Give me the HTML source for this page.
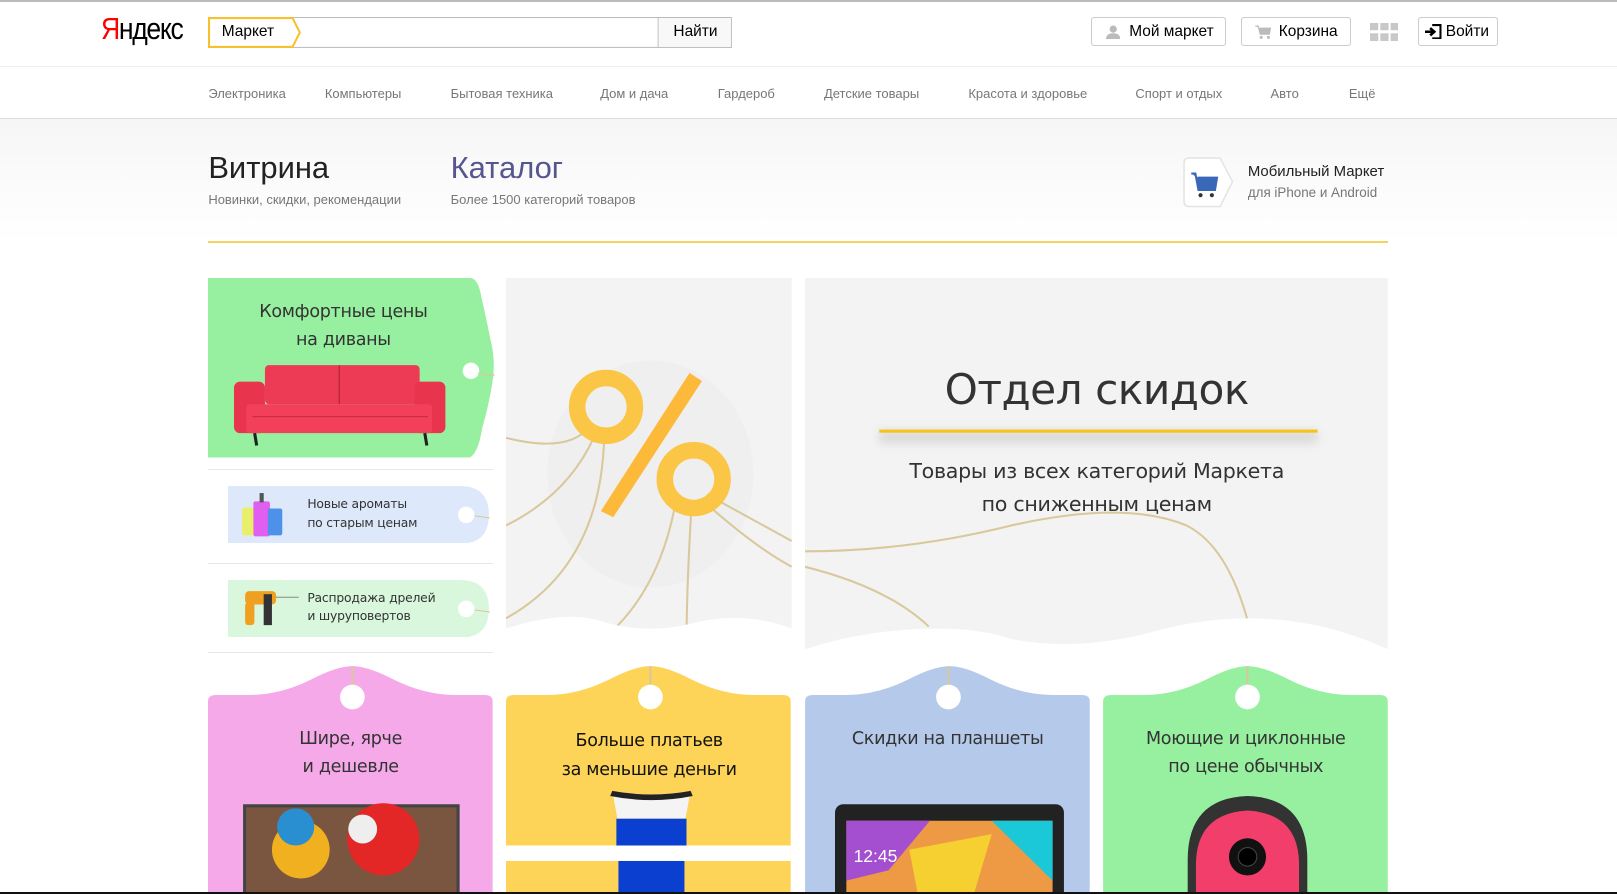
<!DOCTYPE html>
<html><head><meta charset="utf-8"><style>
html,body{margin:0;padding:0;background:#fff;overflow:hidden;width:1617px;height:894px}
#w{zoom:1.03125;width:1568px;height:867px;position:relative;font-family:"Liberation Sans","DejaVu Sans",sans-serif;color:#000;overflow:hidden;background:#fff}
.a{position:absolute}
.btn{position:absolute;top:16px;height:29px;border:1px solid #ccc;border-radius:3px;box-sizing:border-box;font-size:15px;line-height:27px;background:#fff}
.nav{position:absolute;top:83px;font-size:12.6px;color:#777}
.t{font-family:"DejaVu Sans","Liberation Sans",sans-serif;color:#333;text-align:center;position:absolute;letter-spacing:-0.3px}
</style></head><body><div id="w">
<div class="a" style="left:0;top:0;width:1568px;height:2px;background:#bbb"></div>
<div class="a" style="left:98px;top:11px;font-size:30px;letter-spacing:-1.5px;transform:scaleX(.86);transform-origin:left"><span style="color:#f00">Я</span>ндекс</div>
<svg class="a" style="left:202px;top:16px" width="508" height="31">
<rect x="0.5" y="0.5" width="507" height="29" fill="#fff" stroke="#bbb"/>
<path d="M1 1H82L89 15L82 29H1Z" fill="#fff" stroke="#f7c12e" stroke-width="2"/>
<line x1="436.5" y1="0" x2="436.5" y2="30" stroke="#bbb"/>
<rect x="437" y="1" width="70" height="28" fill="#f8f8f8"/>
</svg>
<div class="a" style="left:215px;top:22px;font-size:15px">Маркет</div>
<div class="a" style="left:653px;top:22px;font-size:15px">Найти</div>
<div class="btn" style="left:1058px;width:131px;padding-left:36px">Мой маркет</div>
<svg class="a" style="left:1072px;top:24px" width="14" height="14"><circle cx="7" cy="4" r="3.5" fill="#bbb"/><path d="M0 14Q0 8 7 8Q14 8 14 14Z" fill="#bbb"/></svg>
<div class="btn" style="left:1203px;width:107px;padding-left:36px">Корзина</div>
<svg class="a" style="left:1217px;top:24px" width="16" height="14"><path d="M0 1H3L5 9H14L15 3H4" fill="#bbb" stroke="#bbb"/><circle cx="6" cy="12" r="1.5" fill="#bbb"/><circle cx="13" cy="12" r="1.5" fill="#bbb"/></svg>
<svg class="a" style="left:1328px;top:22px" width="28" height="18" fill="#c8c8c8"><rect x="0" y="0" width="8" height="7"/><rect x="10" y="0" width="8" height="7"/><rect x="20" y="0" width="8" height="7"/><rect x="0" y="10" width="8" height="8"/><rect x="10" y="10" width="8" height="8"/><rect x="20" y="10" width="8" height="8"/></svg>
<div class="btn" style="left:1375px;width:78px;padding-left:26px">Войти</div>
<svg class="a" style="left:1382px;top:23px" width="16" height="15"><path d="M7 1H15V14H7" fill="none" stroke="#000" stroke-width="2"/><path d="M0 7.5H8M5 4L9 7.5L5 11" stroke="#000" stroke-width="2.5" fill="none"/></svg>
<div class="a" style="left:0;top:64px;width:1568px;height:1px;background:#eee"></div>
<div class="nav" style="left:202px">Электроника</div>
<div class="nav" style="left:315px">Компьютеры</div>
<div class="nav" style="left:437px">Бытовая техника</div>
<div class="nav" style="left:582px">Дом и дача</div>
<div class="nav" style="left:696px">Гардероб</div>
<div class="nav" style="left:799px">Детские товары</div>
<div class="nav" style="left:939px">Красота и здоровье</div>
<div class="nav" style="left:1101px">Спорт и отдых</div>
<div class="nav" style="left:1232px">Авто</div>
<div class="nav" style="left:1308px">Ещё</div>
<div class="a" style="left:0;top:114px;width:1568px;height:1px;background:#ddd"></div>
<div class="a" style="left:0;top:115px;width:1568px;height:120px;background:linear-gradient(#f6f6f6,#fff)"></div>
<div class="a" style="left:202px;top:145px;font-size:30px;color:#222">Витрина</div>
<div class="a" style="left:202px;top:186px;font-size:12.6px;color:#777">Новинки, скидки, рекомендации</div>
<div class="a" style="left:437px;top:145px;font-size:30px;color:#55558f">Каталог</div>
<div class="a" style="left:437px;top:186px;font-size:12.6px;color:#777">Более 1500 категорий товаров</div>
<svg class="a" style="left:1147px;top:152px" width="50" height="50"><path d="M6 1H36L48 24L36 48H6Q1 48 1 43V6Q1 1 6 1Z" fill="#fff" stroke="#e4e4e4" stroke-width="1.5"/><path d="M8 16H12L15 32H31L33 20H14" fill="#3968b8" stroke="#3968b8" stroke-width="2"/><circle cx="17" cy="37" r="2" fill="#333"/><circle cx="28" cy="37" r="2" fill="#333"/></svg>
<div class="a" style="left:1210px;top:158px;font-size:14.5px;color:#222">Мобильный Маркет</div>
<div class="a" style="left:1210px;top:179px;font-size:13px;color:#777">для iPhone и Android</div>
<div class="a" style="left:202px;top:234px;width:1144px;height:2px;background:#f7d25e"></div>

<svg class="a" style="left:202px;top:270px" width="278" height="176"><path d="M0 0H254Q262 0 265 18Q270 40 274 60Q279 80 276 100Q272 125 266 145Q262 170 254 174H0Z" fill="#97f09f"/><circle cx="255" cy="90" r="8" fill="#fff"/><path d="M262 92Q270 95 278 94" stroke="#d8c79a" fill="none"/></svg>
<div class="t" style="left:202px;top:290px;width:262px;font-size:17px;line-height:27px">Комфортные цены<br>на диваны</div>
<svg class="a" style="left:227px;top:352px" width="205" height="82"><rect x="30" y="2" width="150" height="38" rx="4" fill="#ee3b55"/><rect x="0" y="18" width="30" height="50" rx="6" fill="#e8344c"/><rect x="175" y="18" width="30" height="50" rx="6" fill="#e8344c"/><rect x="12" y="40" width="180" height="28" rx="3" fill="#f2405a"/><line x1="102" y1="2" x2="102" y2="40" stroke="#a52035"/><line x1="18" y1="52" x2="188" y2="52" stroke="#c42a40"/><path d="M20 68L22 80M185 68L187 80" stroke="#222" stroke-width="3"/></svg>
<div class="a" style="left:202px;top:455px;width:276px;height:1px;background:#e8e8e8"></div>
<svg class="a" style="left:221px;top:471px" width="254" height="56"><path d="M0 0H225Q253 0 253 28Q253 56 225 56H0Z" fill="#dde9fb"/><circle cx="231" cy="28" r="8" fill="#fff"/><path d="M239 29L254 31" stroke="#d8c79a"/></svg>
<svg class="a" style="left:233px;top:476px" width="44" height="45"><rect x="2" y="16" width="13" height="27" rx="2" fill="#e9ef6b"/><rect x="13" y="10" width="16" height="34" rx="2" fill="#e05ef0"/><rect x="27" y="17" width="14" height="26" rx="2" fill="#4d92e8"/><rect x="19" y="2" width="4" height="9" fill="#555"/></svg>
<div class="a" style="left:298px;top:480px;line-height:18px;color:#333;font-family:'DejaVu Sans',sans-serif;font-size:12px;letter-spacing:-0.2px">Новые ароматы<br>по старым ценам</div>
<div class="a" style="left:202px;top:546px;width:276px;height:1px;background:#e8e8e8"></div>
<svg class="a" style="left:221px;top:562px" width="254" height="56"><path d="M0 0H225Q253 0 253 28Q253 56 225 56H0Z" fill="#d9f7dc"/><circle cx="231" cy="28" r="8" fill="#fff"/><path d="M239 29L254 31" stroke="#d8c79a"/></svg>
<svg class="a" style="left:234px;top:570px" width="56" height="38"><rect x="4" y="3" width="30" height="13" rx="4" fill="#f0a020"/><rect x="4" y="14" width="9" height="22" rx="3" fill="#f0a020"/><rect x="22" y="6" width="8" height="30" fill="#333"/><line x1="34" y1="9" x2="56" y2="9" stroke="#888"/></svg>
<div class="a" style="left:298px;top:571px;line-height:18px;color:#333;font-family:'DejaVu Sans',sans-serif;font-size:12px;letter-spacing:-0.2px">Распродажа дрелей<br>и шуруповертов</div>
<div class="a" style="left:202px;top:632px;width:276px;height:1px;background:#e8e8e8"></div>

<svg class="a" style="left:491px;top:270px" width="277" height="364">
<rect width="277" height="364" fill="#f3f3f3"/>
<ellipse cx="140" cy="190" rx="100" ry="110" fill="#ececec" opacity=".6"/>
<g fill="none" stroke="#d8c89c" stroke-width="2">
<path d="M80 145Q60 170 0 155"/><path d="M85 155Q60 210 0 240"/><path d="M95 160Q90 280 0 330"/>
<path d="M165 215Q150 300 100 345"/><path d="M180 220Q175 300 175 360"/><path d="M190 215Q240 260 277 280"/><path d="M195 210Q250 240 277 255"/>
</g>
<circle cx="97" cy="125" r="28" fill="none" stroke="#fbc546" stroke-width="16"/>
<polygon points="178,92 190,100 104,232 92,226" fill="#fdb93a"/>
<circle cx="182" cy="195" r="28" fill="none" stroke="#fbc546" stroke-width="16"/>
<path d="M0 340Q60 320 100 335Q140 345 180 335Q230 322 277 340V364H0Z" fill="#fff"/>
</svg>
<svg class="a" style="left:781px;top:270px" width="565" height="364">
<rect width="565" height="364" fill="#f3f3f3"/>
<rect x="72" y="147" width="425" height="14" fill="#999" opacity=".25" filter="blur(4px)"/>
<rect x="72" y="147" width="425" height="3" fill="#f8c21c"/>
<g fill="none" stroke="#d8c89c" stroke-width="2"><path d="M0 265Q100 265 200 240Q310 215 370 240Q410 260 430 335"/><path d="M0 280Q80 300 120 338"/></g>
<path d="M0 360Q60 340 130 340Q170 340 200 350Q260 362 330 345Q380 330 430 330Q500 330 565 360V364H0Z" fill="#fff"/>
</svg>
<div class="t" style="left:781px;top:354px;width:565px;font-size:41px;color:#333;letter-spacing:-0.5px">Отдел скидок</div>
<div class="t" style="left:781px;top:441px;width:565px;font-size:20px;line-height:32px">Товары из всех категорий Маркета<br>по сниженным ценам</div>

<svg class="a" style="left:202px;top:644px" width="1144" height="223">
<defs><path id="tg" d="M0 36Q0 30 8 30H40Q70 30 100 15Q125 2 140 2Q155 2 180 15Q210 30 240 30H268Q276 30 276 36V223H0Z"/></defs>
<use href="#tg" fill="#f5a9e8"/>
<use href="#tg" x="289" fill="#fdd457"/>
<use href="#tg" x="579" fill="#b5c9ea"/>
<use href="#tg" x="868" fill="#97f09f"/>
<g fill="#fff"><circle cx="140" cy="32" r="12"/><circle cx="429" cy="32" r="12"/><circle cx="718" cy="32" r="12"/><circle cx="1008" cy="32" r="12"/></g>
<g stroke="#d8c89c" stroke-width="2"><path d="M140 2V20M429 2V20M718 2V20M1008 2V20"/></g>
<rect x="34" y="136" width="210" height="90" fill="#444"/><rect x="37" y="139" width="204" height="90" fill="#7a5540"/>
<circle cx="90" cy="180" r="28" fill="#f0b020"/><circle cx="85" cy="158" r="18" fill="#2a8fd0"/><circle cx="170" cy="170" r="35" fill="#e32626"/><circle cx="150" cy="160" r="14" fill="#eee"/>
<rect x="289" y="176" width="276" height="15" fill="#fff"/>
<path d="M392 123Q430 130 468 123L463 150H397Z" fill="#f4f4f4"/><path d="M392 123Q430 130 468 123L470 128Q430 136 390 128Z" fill="#222"/>
<rect x="396" y="150" width="68" height="26" fill="#0a3fd0"/><rect x="398" y="191" width="64" height="32" fill="#0a3fd0"/>
<rect x="608" y="136" width="222" height="100" rx="8" fill="#222"/><rect x="619" y="152" width="200" height="80" fill="#e94"/>
<polygon points="619,152 700,152 660,200 619,210" fill="#a44fd0"/><polygon points="760,152 819,152 819,210" fill="#1ac8d8"/><polygon points="680,180 760,165 740,232 690,232" fill="#f5d030"/>
<text x="626" y="192" font-size="17" fill="#fff" font-family="Liberation Sans">12:45</text>
<path d="M950 223V190Q950 130 1008 128Q1066 130 1066 190V223Z" fill="#333"/><path d="M958 223V195Q958 145 1008 142Q1058 145 1058 195V223Z" fill="#f23e6a"/>
<circle cx="1008" cy="187" r="18" fill="#111"/><circle cx="1008" cy="187" r="9" fill="#000" stroke="#444"/>
</svg>
<div class="t" style="left:202px;top:704px;width:276px;font-size:17px;line-height:27px">Шире, ярче<br>и дешевле</div>
<div class="t" style="left:491px;top:705px;width:277px;font-size:17px;line-height:28px;color:#111">Больше платьев<br>за меньшие деньги</div>
<div class="t" style="left:781px;top:704px;width:276px;font-size:17px;line-height:27px">Скидки на планшеты</div>
<div class="t" style="left:1070px;top:704px;width:276px;font-size:17px;line-height:27px">Моющие и циклонные<br>по цене обычных</div>
</div>
<div style="position:absolute;left:0;top:892px;width:1617px;height:2px;background:#111"></div>
</body></html>
